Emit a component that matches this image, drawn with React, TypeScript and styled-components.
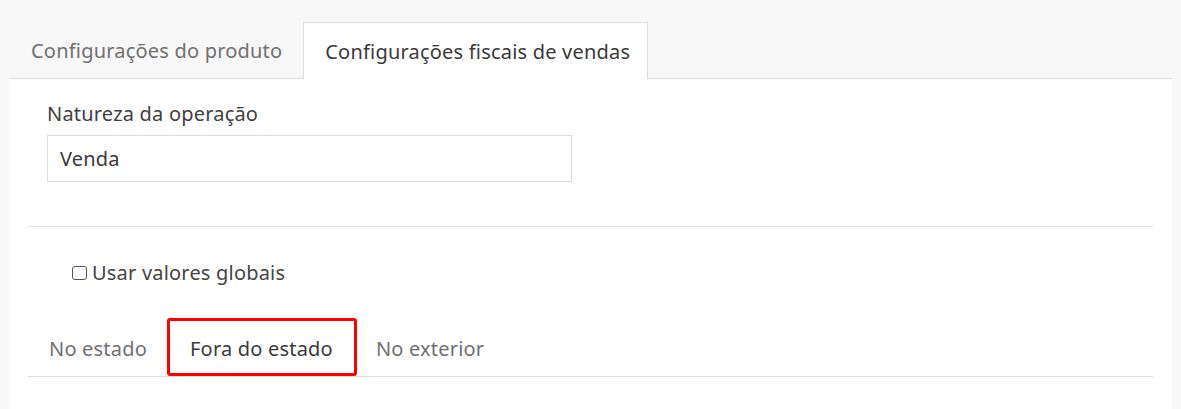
import React from "react";
import styled, { createGlobalStyle } from "styled-components";

const Global = createGlobalStyle`
  html, body { margin: 0; padding: 0; background: #f8f8f8; }
  body { font-family: "Noto Sans", "Open Sans", sans-serif; letter-spacing: 0.2px; }
`;

const Page = styled.div`
  padding: 22px 9px 0 9px;
  min-height: 409px;
  box-sizing: border-box;
`;

const TabNav = styled.div`
  display: flex;
  border-bottom: 1px solid #dddddd;
  height: 56px;
`;

const Tab = styled.div<{ $active?: boolean }>`
  display: flex;
  align-items: center;
  padding: 0 ${(p) => (p.$active ? "17px" : "20px")} 0 21px;
  font-size: 20px;
  color: ${(p) => (p.$active ? "#3a3a3a" : "#707070")};
  background: ${(p) => (p.$active ? "#ffffff" : "transparent")};
  border: 1px solid ${(p) => (p.$active ? "#dddddd" : "transparent")};
  border-bottom: none;
  box-sizing: border-box;
  height: ${(p) => (p.$active ? "57px" : "56px")};
  margin-bottom: ${(p) => (p.$active ? "-1px" : "0")};
`;

const Panel = styled.div`
  background: #ffffff;
  padding: 23px 19px 40px 19px;
  min-height: 330px;
  box-sizing: border-box;
`;

const FieldGroup = styled.div`
  padding-left: 19px;
  display: flex;
  flex-direction: column;
`;

const Label = styled.label`
  font-size: 20px;
  line-height: 24px;
  color: #3f3f3f;
`;

const Input = styled.div`
  margin-top: 9px;
  width: 525px;
  height: 47px;
  box-sizing: border-box;
  border: 1px solid #dcdcdc;
  display: flex;
  align-items: center;
  padding: 0 12px;
  font-size: 20px;
  color: #3a3a3a;
`;

const Divider = styled.hr`
  border: none;
  border-top: 1px solid #e6e6e6;
  margin: 44px 0 0 0;
`;

const CheckRow = styled.label`
  margin: 34px 0 0 44px;
  display: flex;
  align-items: center;
  gap: 5px;
  font-size: 20px;
  line-height: 24px;
  color: #444444;
`;

const Box = styled.span`
  width: 13px;
  height: 12px;
  border: 1.5px solid #555555;
  border-radius: 3px;
  display: inline-block;
`;

const SubNav = styled.div`
  margin-top: 36px;
  display: flex;
  border-bottom: 1px solid #dddddd;
`;

const SubTab = styled.div<{ $active?: boolean }>`
  position: relative;
  height: 55px;
  display: flex;
  align-items: center;
  padding: 0 22px 0 21px;
  font-size: 20px;
  color: ${(p) => (p.$active ? "#3a3a3a" : "#707070")};
  ${(p) =>
    p.$active
      ? `&::after {
    content: "";
    position: absolute;
    top: -3px;
    left: -2px;
    right: -2px;
    bottom: 0;
    border: 3px solid #ff0000;
    border-radius: 3px;
  }`
      : ""}
`;

export default function App() {
  return (
    <>
      <Global />
      <Page>
        <TabNav>
          <Tab>Configurações do produto</Tab>
          <Tab $active>Configurações fiscais de vendas</Tab>
        </TabNav>
        <Panel>
          <FieldGroup>
            <Label>Natureza da operação</Label>
            <Input>Venda</Input>
          </FieldGroup>
          <Divider />
          <CheckRow>
            <Box />
            Usar valores globais
          </CheckRow>
          <SubNav>
            <SubTab>No estado</SubTab>
            <SubTab $active>Fora do estado</SubTab>
            <SubTab>No exterior</SubTab>
          </SubNav>
        </Panel>
      </Page>
    </>
  );
}
